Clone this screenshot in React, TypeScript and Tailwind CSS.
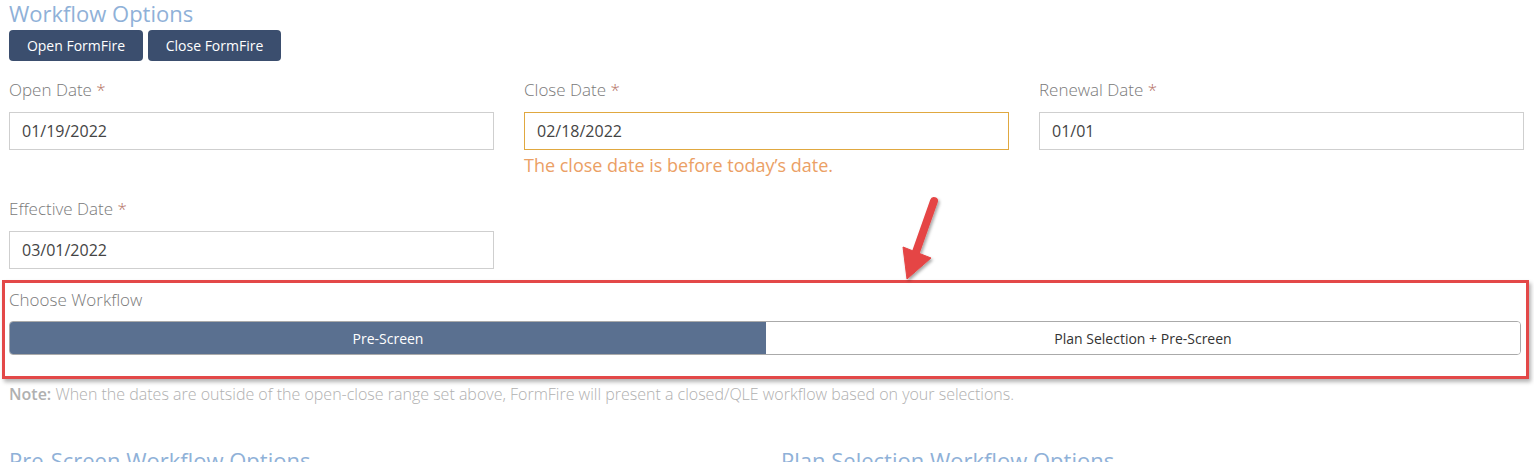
const font = { fontFamily: '"Open Sans", "Noto Sans", sans-serif' };

const DateField = ({
  label,
  value,
  warn,
  error,
}: {
  label: string;
  value: string;
  warn?: boolean;
  error?: string;
}) => (
  <div className="flex flex-col">
    <label className="block h-[22px] text-[17px] leading-[22px] font-light text-[#7a7a7a]">
      {label} <span className="text-[#b3705f]">*</span>
    </label>
    <div
      className={`mt-[11px] flex h-[38px] items-center border px-[12px] text-[16px] text-[#444] ${
        warn ? "border-[#e0a840]" : "border-[#cfcfcf]"
      }`}
    >
      {value}
    </div>
    {error && (
      <p className="mt-[2px] h-[26px] text-[18px] leading-[26px] text-[#eba065]">
        {error}
      </p>
    )}
  </div>
);

export default function App() {
  return (
    <div className="relative h-[462px] w-[1534px] overflow-hidden bg-white" style={font}>
      <div className="px-[9px]">
        <h2 className="h-[28px] text-[22px] leading-[26px] text-[#8fb1d8]">Workflow Options</h2>
        <div className="mt-[2px] flex gap-[5px]">
          <button className="h-[31px] w-[134px] rounded-[4px] bg-[#3b4e6e] text-[14px] text-white">
            Open FormFire
          </button>
          <button className="h-[31px] w-[133px] rounded-[4px] bg-[#3b4e6e] text-[14px] text-white">
            Close FormFire
          </button>
        </div>

        <div className="mt-[18px] grid grid-cols-[485px_485px_485px] gap-x-[30px]">
          <DateField label="Open Date" value="01/19/2022" />
          <DateField
            label="Close Date"
            value="02/18/2022"
            warn
            error="The close date is before today’s date."
          />
          <DateField label="Renewal Date" value="01/01" />
        </div>

        <div className="mt-[20px] w-[485px]">
          <DateField label="Effective Date" value="03/01/2022" />
        </div>
      </div>

      <div className="ml-[2px] mt-[11px] h-[99px] w-[1527px] border-[3px] border-[#e34848] px-[4px] pt-[5px] shadow-[2px_3px_4px_rgba(0,0,0,0.3)]">
        <p className="h-[24px] text-[17px] leading-[24px] font-light text-[#7a7a7a]">Choose Workflow</p>
        <div className="mt-[9px] flex h-[34px] w-[1512px] overflow-hidden rounded-[4px] border border-[#aaa] text-[14px]">
          <div className="flex w-[756px] items-center justify-center bg-[#5a7090] text-white">Pre-Screen</div>
          <div className="flex flex-1 items-center justify-center bg-white text-[#333]">
            Plan Selection + Pre-Screen
          </div>
        </div>
      </div>

      <div className="px-[9px]">
        <p className="mt-[4px] text-[16px] leading-[22px] font-light text-[#b0b0b0]">
          <span className="font-semibold">Note:</span> When the dates are outside of the open-close range set
          above, FormFire will present a closed/QLE workflow based on your selections.
        </p>
        <div className="mt-[42px] flex">
          <h2 className="w-[772px] text-[22px] leading-[26px] text-[#8fb1d8]">Pre-Screen Workflow Options</h2>
          <h2 className="text-[22px] leading-[26px] text-[#8fb1d8]">Plan Selection Workflow Options</h2>
        </div>
      </div>

      <svg className="pointer-events-none absolute left-0 top-0" width="1534" height="462">
        <defs>
          <filter id="sh" x="-50%" y="-50%" width="200%" height="200%">
            <feDropShadow dx="1.5" dy="2" stdDeviation="1.5" floodColor="#000" floodOpacity="0.35" />
          </filter>
        </defs>
        <g filter="url(#sh)" fill="#e54545" stroke="#e54545">
          <line x1="934" y1="201" x2="916" y2="252" strokeWidth="8" strokeLinecap="round" />
          <polygon points="903,247 931,258 907,279" strokeWidth="1" strokeLinejoin="round" />
        </g>
      </svg>
    </div>
  );
}
